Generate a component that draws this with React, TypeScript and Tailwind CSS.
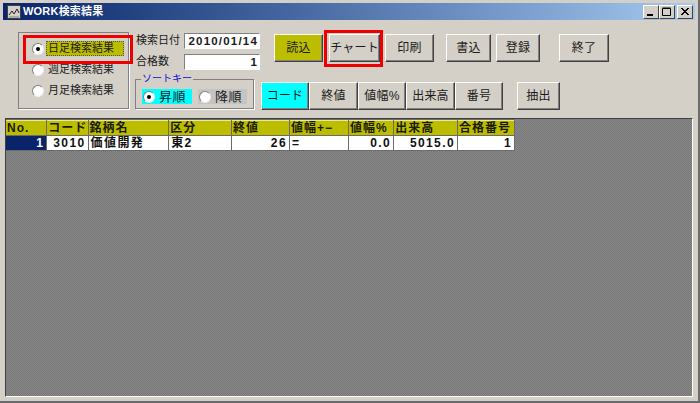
const font = { fontFamily: '"Liberation Sans","Noto Sans CJK JP",sans-serif' };

function Btn({ label, w, cls = "bg-[#d4d0c8]", ml = 0 }: { label: string; w: string; cls?: string; ml?: number }) {
  return (
    <div
      style={ml ? { marginLeft: ml } : undefined}
      className={`${w} h-[28px] flex items-center justify-center whitespace-nowrap text-[12px] text-[#1a1a1a] tracking-[0.2px] border border-t-white border-l-white border-r-[#404040] border-b-[#404040] shadow-[inset_-1px_-1px_0_#808080] ${cls}`}
    >
      {label}
    </div>
  );
}

function Radio({ on }: { on?: boolean }) {
  return (
    <span className="w-[12px] h-[12px] shrink-0 rounded-full bg-white border border-t-[#808080] border-l-[#808080] border-r-[#eeeeee] border-b-[#eeeeee] flex items-center justify-center">
      {on && <span className="w-[4px] h-[4px] rounded-full bg-black" />}
    </span>
  );
}

const cols = [
  { w: "w-[41px]", h: "No.", v: "1", a: "text-right", sel: true },
  { w: "w-[41px]", h: "コード", v: "3010", a: "text-right" },
  { w: "w-[81px]", h: "銘柄名", v: "価値開発", a: "text-left" },
  { w: "w-[63px]", h: "区分", v: "東2", a: "text-left" },
  { w: "w-[58px]", h: "終値", v: "26", a: "text-right" },
  { w: "w-[59px]", h: "値幅+−", v: "=", a: "text-left" },
  { w: "w-[45px]", h: "値幅%", v: "0.0", a: "text-right" },
  { w: "w-[64px]", h: "出来高", v: "5015.0", a: "text-right" },
  { w: "w-[57px]", h: "合格番号", v: "1", a: "text-right" },
];

export default function App() {
  return (
    <div style={font} className="relative w-[700px] h-[403px] overflow-hidden bg-[#d4d0c8] flex flex-col p-[3px] pb-[1px] border-b-2 border-r-2 border-[#6a6a6a]">
      {/* title bar */}
      <div className="h-[17px] shrink-0 flex items-center pl-[4px] pr-[2px] bg-gradient-to-r from-[#0a246a] to-[#a6caf0]">
        <svg width="14" height="14" viewBox="0 0 14 14" className="shrink-0">
          <rect x="0.5" y="0.5" width="13" height="13" fill="#d4d0c8" stroke="#404040" />
          <path d="M2 10 L5 6 L7 9 L10 4 L12 8" fill="none" stroke="#222" />
          <path d="M2 12 H12" stroke="#808080" />
        </svg>
        <span className="ml-[2px] text-[11px] font-bold text-white tracking-[0.2px]">WORK検索結果</span>
        <div className="ml-auto flex">
          {["min", "max", "close"].map((k) => (
            <div key={k} className={`w-[16px] h-[14px] bg-[#d4d0c8] border border-t-white border-l-white border-r-[#404040] border-b-[#404040] flex items-center justify-center ${k === "close" ? "ml-[2px]" : ""}`}>
              <svg width="10" height="10" viewBox="0 0 10 10">
                {k === "min" && <rect x="1" y="7" width="6" height="2" fill="#000" />}
                {k === "max" && <path d="M0.5 1.5 H8.5 V8.5 H0.5 Z M0.5 1 H8.5" fill="none" stroke="#000" />}
                {k === "close" && <path d="M1 1 L8 8 M2 1 L9 8 M8 1 L1 8 M9 1 L2 8" stroke="#000" />}
              </svg>
            </div>
          ))}
        </div>
      </div>

      {/* toolbar */}
      <div className="h-[98px] shrink-0 flex text-[11px] text-[#1a1a1a] whitespace-nowrap">
        {/* radio group */}
        <div className="ml-[15px] mt-[12px] w-[111px] h-[77px] border border-[#808080] shadow-[1px_1px_0_#fff] flex flex-col pl-[13px] pt-[5px]">
          <div className="h-[21px] flex items-center gap-[2px]">
            <Radio on />
            <span className="bg-[#bdbd00] h-[15px] w-[78px] pl-[2px] leading-[15px] outline-1 outline-dotted outline-[#555] -outline-offset-1">日足検索結果</span>
          </div>
          <div className="h-[21px] flex items-center gap-[4px]">
            <Radio />
            <span>週足検索結果</span>
          </div>
          <div className="h-[21px] flex items-center gap-[4px]">
            <Radio />
            <span>月足検索結果</span>
          </div>
        </div>

        {/* search fields + sort key */}
        <div className="ml-[7px] w-[124px] flex flex-col">
          <div className="mt-[12px] h-[17px] flex items-center">
            <span className="w-[48px]">検索日付</span>
            <div className="w-[76px] h-[16px] bg-white border border-t-[#808080] border-l-[#808080] border-r-white border-b-white text-right pr-[1px] text-[11.5px] font-bold leading-[14px] tracking-[1.2px]">2010/01/14</div>
          </div>
          <div className="mt-[4px] h-[17px] flex items-center">
            <span className="w-[48px]">合格数</span>
            <div className="w-[76px] h-[16px] bg-white border border-t-[#808080] border-l-[#808080] border-r-white border-b-white text-right pr-[2px] text-[11.5px] font-bold leading-[14px]">1</div>
          </div>
          <div className="mt-[9px] -ml-[1px] w-[119px] h-[30px] border border-[#808080] shadow-[1px_1px_0_#fff] relative flex items-center pl-[6px] gap-[6px]">
            <span className="absolute -top-[8px] left-[5px] px-[1px] bg-[#d4d0c8] text-[#1010d0] text-[10px] leading-[14px]">ソートキー</span>
            <div className="mt-[5px] w-[50px] h-[15px] bg-[#00ffff] flex items-center pl-[1px] gap-[4px] text-[13px] tracking-[0.5px]">
              <Radio on />
              <span>昇順</span>
            </div>
            <div className="mt-[5px] w-[49px] h-[15px] bg-[#c4c4c4] flex items-center pl-[1px] gap-[4px] text-[13px] tracking-[0.5px]">
              <Radio />
              <span>降順</span>
            </div>
          </div>
        </div>

        {/* buttons */}
        <div className="flex flex-col">
          <div className="mt-[14px] flex">
            <Btn ml={14} label="読込" w="w-[49px]" cls="bg-[#bdbd00]" />
            <Btn ml={6} label="チャート" w="w-[51px]" />
            <Btn ml={5} label="印刷" w="w-[49px]" />
            <Btn ml={12} label="書込" w="w-[45px]" />
            <Btn ml={5} label="登録" w="w-[44px]" />
            <Btn ml={19} label="終了" w="w-[50px]" />
          </div>
          <div className="mt-[20px] flex">
            <Btn ml={1} label="コード" w="w-[48px]" cls="bg-[#00ffff]" />
            <Btn label="終値" w="w-[49px]" />
            <Btn label="値幅%" w="w-[48px]" />
            <Btn label="出来高" w="w-[49px]" />
            <Btn label="番号" w="w-[48px]" />
            <Btn ml={14} label="抽出" w="w-[43px]" />
          </div>
        </div>
      </div>

      {/* grid */}
      <div className="mx-[2px] mb-[3px] flex-1 border border-t-[#404040] border-l-[#404040] border-r-white border-b-white bg-[#808080] bg-[repeating-conic-gradient(#787878_0_25%,#888888_0_50%)] bg-[length:2px_2px]">
        <div className="w-[509px] bg-[#404040]">
          <div className="flex pt-[1px] bg-[#6a6a6a]">
            {cols.map((c) => (
              <div key={c.h} className={`${c.w} h-[15px] mr-[1px] bg-[#bdbd00] border-t border-[#e8e8a0] text-[12px] font-bold leading-[14px] pl-[1px] tracking-[1px] text-[#1a1a00]`}>{c.h}</div>
            ))}
          </div>
          <div className="flex py-[1px] bg-[#6a6a6a]">
            {cols.map((c) => (
              <div key={c.h} className={`${c.w} h-[14px] mr-[1px] ${c.sel ? "bg-[#0a246a] text-white" : "bg-white text-[#111]"} ${c.a} text-[12px] font-bold leading-[14px] px-[2px] tracking-[1.4px]`}>{c.v}</div>
            ))}
          </div>
        </div>
      </div>

      {/* red annotations */}
      <div className="absolute left-[23px] top-[35px] w-[110px] h-[29px] border-[3px] border-[#ee0000]" />
      <div className="absolute left-[324px] top-[30px] w-[59px] h-[37px] border-[3px] border-[#ee0000]" />
    </div>
  );
}
